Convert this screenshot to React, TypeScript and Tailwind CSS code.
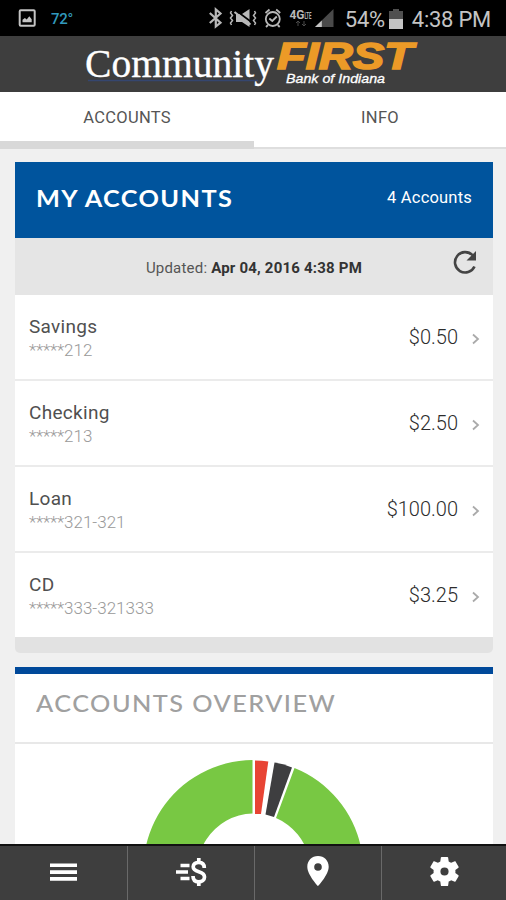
import React from "react";

const accounts = [
  { name: "Savings", mask: "*****", number: "212", amount: "$0.50" },
  { name: "Checking", mask: "*****", number: "213", amount: "$2.50" },
  { name: "Loan", mask: "*****", number: "321-321", amount: "$100.00" },
  { name: "CD", mask: "*****", number: "333-321333", amount: "$3.25" },
];

function StatusBar() {
  return (
    <div className="flex h-9 shrink-0 items-center bg-black pl-[18px] pr-[15px] text-[#c4c4c4]">
      <svg className="h-[18px] w-[18px]" viewBox="0 0 18 18" fill="none">
        <rect x="1.7" y="1.2" width="15" height="15.5" rx="1" stroke="#c4c4c4" strokeWidth="2" />
        <path d="M4.5 13.2v-2.4l2.4-1.8 1.8 1.4 2.6-3.2 2.4 3v3z" fill="#c4c4c4" />
      </svg>
      <span className="ml-[15px] mt-[2px] text-[15px] font-medium tracking-[-0.3px] text-[#3199bd]">72°</span>
      <svg className="ml-auto h-9 w-[134px]" viewBox="200 0 134 36" fill="none" stroke="#b8b8b8">
        <path d="M206.800 13l10.700 9.700-4.700 3.800V9.500l4.700 4-10.700 9.500" strokeWidth="2.200" />
        <path d="M228.500 11l-1 2 2 2.500-2 2.500 2 2.500-2 2.500 1 2M251.500 11l1 2-2 2.500 2 2.500-2 2.500 2 2.500-1 2" strokeWidth="1.500" />
        <path d="M233 14h6l7.500-5v18l-7.500-5h-6z" fill="#b8b8b8" stroke="none" />
        <path d="M233 10.500l16 12" stroke="#000" strokeWidth="1.600" />
        <path d="M231.500 12l16 12.500" strokeWidth="2.200" />
        <circle cx="269.800" cy="19" r="7" strokeWidth="1.800" />
        <path d="M262.500 13l4-3.500M277.200 13l-4-3.500M266.300 18.500l3 2.500 4.500-4.500M265 25l-2 2M274.700 25l2 2" strokeWidth="1.800" />
        <g fill="#b8b8b8" stroke="none" fontFamily="Roboto, sans-serif" fontWeight="700">
          <text x="286.500" y="19" fontSize="13" textLength="15" lengthAdjust="spacingAndGlyphs">4G</text>
          <text x="301.500" y="18.500" fontSize="9.500" textLength="7" lengthAdjust="spacingAndGlyphs">LTE</text>
        </g>
        <path d="M295 21v5m-2-3l2-2 2 2M301 21v5m-2-2l2 2 2-2" stroke="#4a4a4a" />
        <path d="M312 27L330.500 9v18z" fill="#4a4a4a" stroke="none" />
        <path d="M312 27l6.800-6.600V27z" fill="#c4c4c4" stroke="none" />
      </svg>
      <span className="ml-[8px] mt-[3px] whitespace-nowrap text-[22px] tracking-[-0.3px]">54%</span>
      <svg className="ml-[4px] mt-px h-5 w-[14px] shrink-0" viewBox="0 0 14 20">
        <path d="M4 0h6v2h4v18H0V2h4z" fill="#505050" />
        <path d="M0 10h14v10H0z" fill="#c4c4c4" />
      </svg>
      <span className="ml-[9px] mt-[3px] whitespace-nowrap text-[22px] tracking-[-0.25px]">4:38 PM</span>
    </div>
  );
}

function Brand() {
  return (
    <header className="h-[56px] shrink-0 bg-[#3e3e3e]">
      <svg className="block h-[56px] w-[506px]" viewBox="0 36 506 56">
        <path d="M88 80.500H258" stroke="#35466f" strokeWidth="1.300" />
        <text x="85" y="76.500" fontFamily="'Liberation Serif', serif" fontSize="41" fill="#fff" stroke="#fff" strokeWidth="0.300" textLength="189" lengthAdjust="spacingAndGlyphs">Community</text>
        <text x="277" y="68.500" fontFamily="'Liberation Sans', sans-serif" fontSize="36" fontWeight="700" fontStyle="italic" fill="#ec9a27" stroke="#ec9a27" strokeWidth="1.600" textLength="136" lengthAdjust="spacingAndGlyphs">FIRST</text>
        <text x="286" y="83" fontFamily="'Liberation Sans', sans-serif" fontSize="13" fontStyle="italic" fill="#fff" stroke="#fff" strokeWidth="0.300" textLength="99" lengthAdjust="spacingAndGlyphs">Bank of Indiana</text>
      </svg>
    </header>
  );
}

function Tabs() {
  return (
    <nav className="flex h-[57px] shrink-0 bg-white text-[16.5px] text-[#555]">
      <div className="flex w-[254px] flex-col">
        <div className="grid flex-1 place-items-center pt-[3px] tracking-[0.3px]">ACCOUNTS</div>
        <div className="h-2 bg-[#d8d8d8]" />
      </div>
      <div className="flex flex-1 flex-col border-b-2 border-[#dedede]">
        <div className="grid flex-1 place-items-center pt-[3px] tracking-[0.3px]">INFO</div>
        <div className="h-[6px]" />
      </div>
    </nav>
  );
}

function AccountsCard() {
  return (
    <section className="overflow-hidden rounded-b-[5px]">
      <div className="flex h-[76px] items-center justify-between bg-[#00549d] pb-[4px] pl-[21px] pr-[21px] text-white">
        <h2 className="origin-left scale-x-[1.1] font-['Lato',sans-serif] text-[23px] font-bold tracking-[1.25px]">MY ACCOUNTS</h2>
        <span className="text-[16.500px] tracking-[0.2px]">4 Accounts</span>
      </div>
      <div className="flex h-[57px] items-center justify-end bg-[#e5e5e5] pr-[16px]">
        <p className="mr-[91px] mt-[3px] whitespace-nowrap text-[15px] tracking-[0.2px] text-[#555]">
          Updated: <b className="font-bold text-[#333]">Apr 04, 2016 4:38 PM</b>
        </p>
        <svg className="mb-[9px] h-6 w-6" viewBox="0 0 24 24" fill="none">
          <path d="M21.500 16.500A10.200 10.200 0 1 1 19.500 5.200" stroke="#444" strokeWidth="2.600" />
          <path d="M23 1v9.500h-9.500z" fill="#444" />
        </svg>
      </div>
      <div className="bg-white">
        {accounts.map((a, i) => (
          <div
            key={a.name}
            className={
              i < 3
                ? "flex h-[86px] items-center border-b-2 border-[#ebebeb] pl-[14px] pr-[13px]"
                : "flex h-[84px] items-center pl-[14px] pr-[13px]"
            }
          >
            <div className="flex flex-col pt-[3px]">
              <span className="text-[19px] leading-[24px] tracking-[0.3px] text-[#505050]">{a.name}</span>
              <span className="flex text-[17px] font-light leading-[23px] text-[#999]">
                <span className="tracking-[-0.2px]">{a.mask}</span>
                {a.number}
              </span>
            </div>
            <span className="ml-auto text-[20px] font-light text-[#2c2c2c]">{a.amount}</span>
            <svg className="ml-[14px] mt-[3px] h-3 w-2" viewBox="0 0 8 12" fill="none">
              <path d="M1 1.500L6 6 1 10.500" stroke="#aaa" strokeWidth="1.800" />
            </svg>
          </div>
        ))}
      </div>
      <div className="h-4 bg-[#e2e2e2]" />
    </section>
  );
}

function Overview() {
  return (
    <section className="mt-[14px] border-t-[7px] border-[#00499a] bg-white">
      <div className="flex h-[70px] items-center border-b-2 border-[#e8e8e8] pb-[9px] pl-[21px]">
        <h2 className="origin-left scale-x-[1.1] font-['Lato',sans-serif] text-[23px] font-medium tracking-[1.320px] text-[#a0a0a0]">ACCOUNTS OVERVIEW</h2>
      </div>
      <svg className="block h-[100px] w-[478px]" viewBox="15 744 478 100">
        <path d="M294.500 768A110 110 0 1 1 252.500 760V813.500A56.500 56.500 0 1 0 276 818Z" fill="#78c843" />
        <path d="M255 760.500Q262 760.500 268.300 761.500L261 814H255Z" fill="#e84434" />
        <path d="M274.500 762.500Q283 763.500 292 767.500L274 817 265.500 814.500Z" fill="#3e3e40" />
      </svg>
    </section>
  );
}

function BottomNav() {
  return (
    <footer className="grid h-14 shrink-0 grid-cols-[128px_127px_127px_124px] border-t-2 border-[#111] bg-[#3e3e3e]">
      <div className="flex justify-center border-r border-[#696969]">
        <svg className="mt-[16px] h-5 w-[27px]" viewBox="0 0 27 20">
          <path d="M0 1.500h27v3.600H0zM0 8.300h27v3.600H0zM0 15.100h27v3.600H0z" fill="#fff" />
        </svg>
      </div>
      <div className="flex justify-center border-r border-[#696969]">
        <svg className="mt-[11px] h-[30px] w-8" viewBox="0 0 32 30" fill="none" stroke="#fff">
          <path d="M5.500 8.500h9M1 15h12M5.500 21.500h9" strokeWidth="3.300" />
          <path d="M29.300 11c0-4-2.300-5.700-5.500-5.700s-5.600 1.700-5.600 4.500c0 6.500 11.300 3.500 11.300 10.200 0 3-2.600 4.800-5.800 4.800S18 23 18 19M23.800 1v4.500M23.800 24.500V29" strokeWidth="3.700" />
        </svg>
      </div>
      <div className="flex justify-center border-r border-[#696969]">
        <svg className="mt-[10px] h-[30px] w-[22px]" viewBox="0 0 22 30">
          <path fillRule="evenodd" d="M11 0C4.800 0 .3 4.700.3 10.700.3 18.700 11 30 11 30s10.700-11.300 10.700-19.300C21.700 4.700 17.200 0 11 0zm0 7.200a3.800 3.800 0 1 1 0 7.600 3.800 3.800 0 0 1 0-7.600z" fill="#fff" />
        </svg>
      </div>
      <div className="flex justify-center">
        <svg className="mt-[8px] h-[35px] w-[35px]" viewBox="0 0 24 24" fill="#fff">
          <path d="M19.430 12.980c.04-.32.070-.64.070-.98s-.03-.66-.07-.98l2.110-1.650c.19-.15.240-.42.120-.64l-2-3.460c-.12-.22-.39-.3-.61-.22l-2.490 1c-.52-.4-1.080-.73-1.690-.98l-.38-2.650C14.460 2.180 14.250 2 14 2h-4c-.25 0-.46.18-.49.42l-.38 2.650c-.61.25-1.170.59-1.690.98l-2.490-1c-.23-.09-.49 0-.61.22l-2 3.460c-.13.22-.07.49.12.64l2.110 1.650c-.04.320-.07.65-.07.98s.03.66.07.98l-2.110 1.650c-.19.150-.24.42-.12.64l2 3.460c.12.220.39.3.61.22l2.490-1c.52.4 1.080.73 1.690.98l.38 2.650c.03.240.24.420.49.420h4c.25 0 .46-.18.49-.42l.38-2.650c.61-.25 1.170-.59 1.690-.98l2.490 1c.23.090.49 0 .61-.22l2-3.460c.12-.22.070-.49-.12-.64l-2.110-1.650zM12 14.800a2.800 2.800 0 1 1 0-5.600 2.800 2.800 0 0 1 0 5.600z" />
        </svg>
      </div>
    </footer>
  );
}

export default function App() {
  return (
    <div className="flex h-[900px] w-[506px] flex-col overflow-hidden bg-[#f0f0f0] font-['Roboto',sans-serif]">
      <StatusBar />
      <Brand />
      <Tabs />
      <main className="min-h-0 flex-1 overflow-hidden pl-[15px] pr-[13px] pt-[13px]">
        <AccountsCard />
        <Overview />
      </main>
      <BottomNav />
    </div>
  );
}
